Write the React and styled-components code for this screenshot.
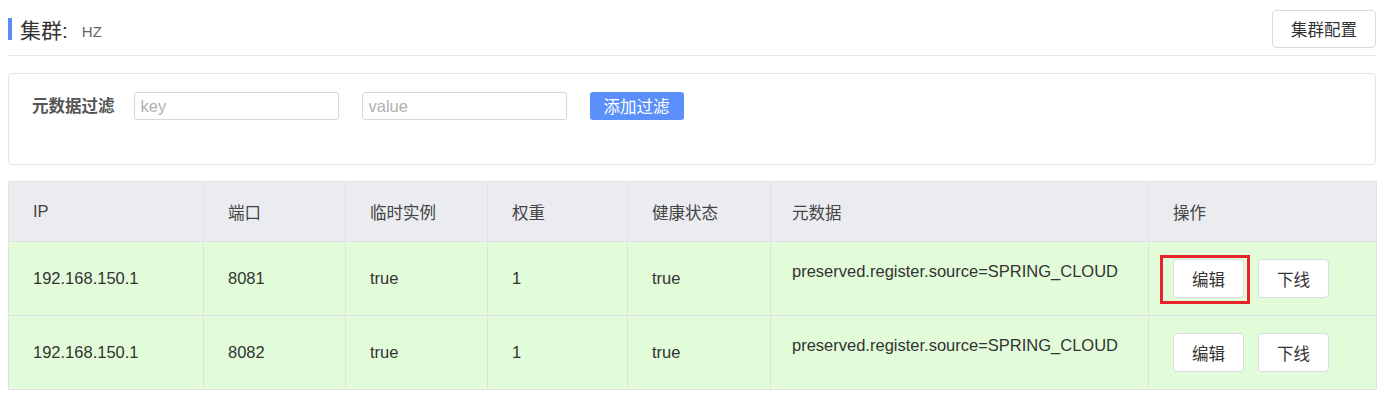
import React from "react";
import styled, { createGlobalStyle } from "styled-components";

const GlobalStyle = createGlobalStyle`
  body {
    margin: 0;
    background: #fff;
    font-family: "Liberation Sans", "Noto Sans CJK SC", sans-serif;
    color: #333;
  }
`;

const Page = styled.div`
  padding: 0 8px;
`;

const TitleBar = styled.div`
  display: flex;
  align-items: center;
  justify-content: space-between;
  height: 56px;
  border-bottom: 1px solid #e6e6e6;
  box-sizing: border-box;
  padding-top: 3px;
`;

const Title = styled.div`
  display: flex;
  align-items: center;
  border-left: 4px solid #5a8cfa;
  padding-left: 8px;
  height: 22px;
  font-size: 21px;
  color: #333;
  .name {
    font-size: 15px;
    color: #666;
    margin-left: 14px;
    margin-top: 4px;
  }
`;

const Button = styled.button`
  position: relative;
  height: ${(p) => p.$h || 38}px;
  padding: 0 ${(p) => p.$px || 18}px;
  border: 1px solid #d8dbe1;
  border-radius: 4px;
  background: #fff;
  color: #333;
  font-family: inherit;
  font-size: 16.5px;
  cursor: pointer;
`;

const PrimaryButton = styled.button`
  height: 28px;
  padding: 0 14px;
  border: none;
  border-radius: 3px;
  background: #5b8ffa;
  color: #fff;
  font-family: inherit;
  font-size: 16.5px;
`;

const FilterCard = styled.div`
  margin-top: 17px;
  height: 92px;
  box-sizing: border-box;
  border: 1px solid #e3e4e8;
  border-radius: 4px;
  padding: 18px 23px;
  display: flex;
  align-items: flex-start;
  gap: 23px;
`;

const Label = styled.label`
  font-size: 16.5px;
  font-weight: bold;
  color: #555;
  line-height: 28px;
  margin-right: -4px;
`;

const Input = styled.input`
  width: 205px;
  height: 28px;
  box-sizing: border-box;
  border: 1px solid #d5d7dd;
  border-radius: 3px;
  padding: 0 6px;
  font-family: inherit;
  font-size: 16.5px;
  &::placeholder {
    color: #b0b0b0;
  }
`;

const Table = styled.table`
  margin-top: 16px;
  width: 100%;
  border-collapse: collapse;
  table-layout: fixed;
  font-size: 16.5px;
`;

const Th = styled.th`
  height: 59px;
  background: #ebecf0;
  border: 1px solid #dfe1e6;
  text-align: left;
  font-weight: normal;
  color: #444;
  padding: 0 ${(p) => p.$pl || 24}px;
`;

const Td = styled.td`
  height: 74px;
  background: #e2fcda;
  border: 1px solid #dfe1e6;
  padding: 0 24px;
  padding-left: ${(p) => p.$pl || 24}px;
  color: #333;
  vertical-align: ${(p) => (p.$top ? "top" : "middle")};
  padding-top: ${(p) => (p.$top ? "20px" : "0")};
  box-sizing: border-box;
  white-space: nowrap;
`;

const Ops = styled.div`
  display: flex;
  gap: 14px;
`;

const Highlight = styled.span`
  position: absolute;
  left: -14px;
  right: -7px;
  top: -5px;
  bottom: -7px;
  border: 3px solid #e8232a;
  pointer-events: none;
`;

const rows = [
  { ip: "192.168.150.1", port: 8081, mark: true },
  { ip: "192.168.150.1", port: 8082, mark: false },
];

const widths = [195, 142, 142, 140, 143, 378, 228];

export default function App() {
  return (
    <>
      <GlobalStyle />
      <Page>
        <TitleBar>
          <Title>
            集群:<span className="name">HZ</span>
          </Title>
          <Button>集群配置</Button>
        </TitleBar>
        <FilterCard>
          <Label>元数据过滤</Label>
          <Input placeholder="key" />
          <Input placeholder="value" />
          <PrimaryButton>添加过滤</PrimaryButton>
        </FilterCard>
        <Table>
          <colgroup>
            {widths.map((w, i) => (
              <col key={i} style={{ width: w }} />
            ))}
          </colgroup>
          <thead>
            <tr>
              <Th>IP</Th>
              <Th>端口</Th>
              <Th>临时实例</Th>
              <Th>权重</Th>
              <Th>健康状态</Th>
              <Th $pl={21}>元数据</Th>
              <Th>操作</Th>
            </tr>
          </thead>
          <tbody>
            {rows.map((r) => (
              <tr key={r.port}>
                <Td>{r.ip}</Td>
                <Td>{r.port}</Td>
                <Td>true</Td>
                <Td>1</Td>
                <Td>true</Td>
                <Td $top $pl={21}>
                  preserved.register.source=SPRING_CLOUD
                </Td>
                <Td>
                  <Ops>
                    <Button $h={39} $px={18}>
                      编辑
                      {r.mark && <Highlight />}
                    </Button>
                    <Button $h={39} $px={18}>
                      下线
                    </Button>
                  </Ops>
                </Td>
              </tr>
            ))}
          </tbody>
        </Table>
      </Page>
    </>
  );
}
